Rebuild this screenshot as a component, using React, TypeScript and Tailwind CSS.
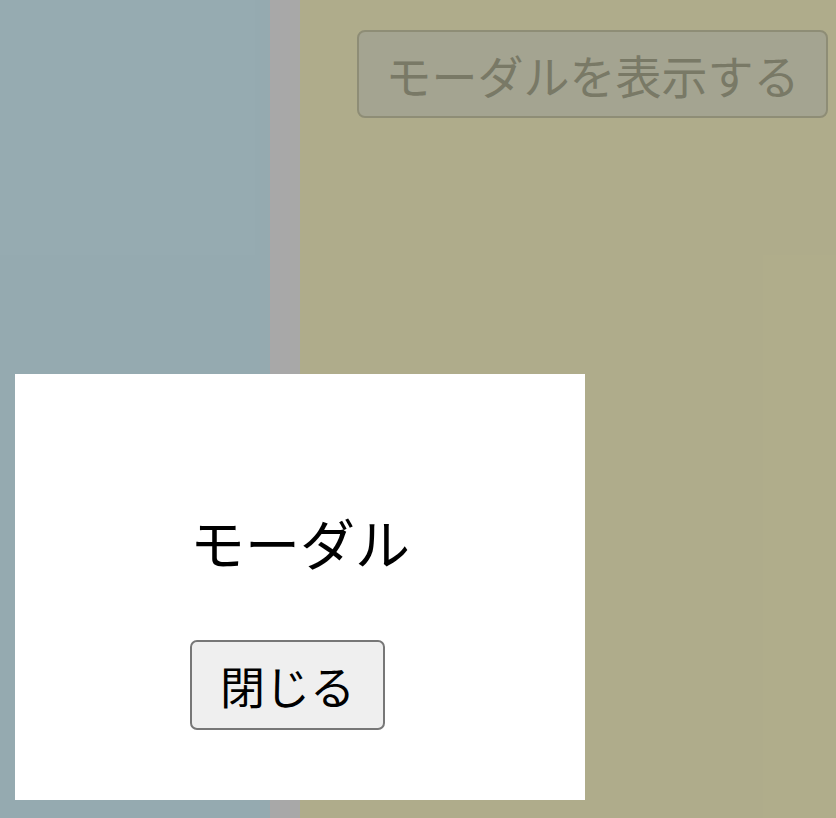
export default function App() {
  return (
    <div
      className="relative h-[818px] w-full overflow-hidden"
      style={{ fontFamily: '"Noto Sans CJK JP", "Noto Sans", sans-serif' }}
    >
      <div className="flex h-full">
        <aside className="w-[270px] shrink-0 bg-[#d6f4fd]" />
        <div className="w-[30px] shrink-0 bg-[#f1f1f1]" />
        <main className="flex-1 bg-[#fbf7c7] pl-[57px] pt-[30px]">
          <button
            type="button"
            className="flex h-[88px] w-[471px] items-center justify-center rounded-[8px] border-[2.5px] border-[#cccaa9] bg-[#ebebd0] text-[46px] leading-none text-[#aeae93]"
          >
            モーダルを表示する
          </button>
        </main>
      </div>

      <div className="absolute inset-0 bg-black/30" />

      <div className="absolute left-[15px] top-[374px] flex h-[426px] w-[570px] flex-col items-center bg-white pt-[126px]">
        <h2 className="text-[55px] leading-[82px] text-black">モーダル</h2>
        <button
          type="button"
          className="mr-[25px] mt-[58px] flex h-[90px] w-[195px] items-center justify-center rounded-[7px] border-[2.5px] border-[#777777] bg-[#efefef] text-[45px] leading-none text-black"
        >
          閉じる
        </button>
      </div>
    </div>
  )
}
